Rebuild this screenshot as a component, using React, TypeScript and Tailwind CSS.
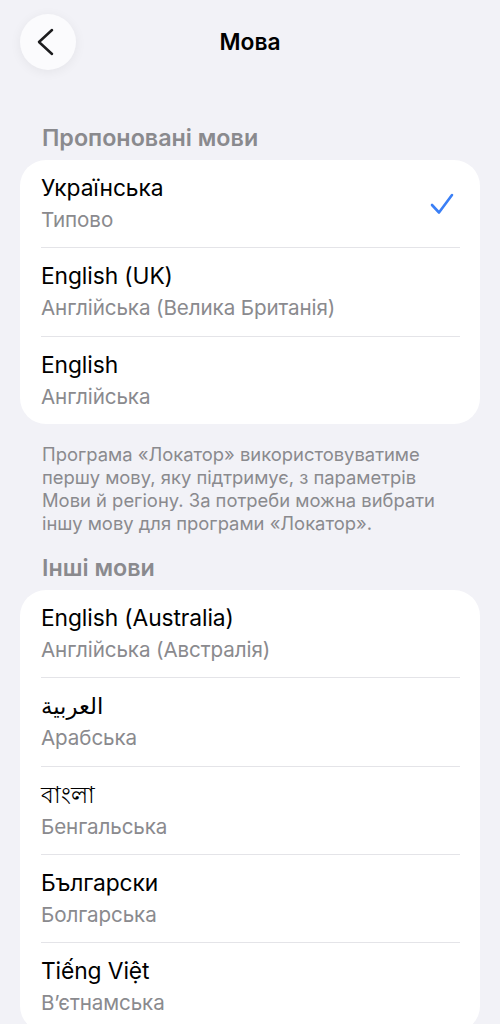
import React from "react";

const font = { fontFamily: "Inter, 'Noto Sans', 'DejaVu Sans', sans-serif" };

type Item = { title: string; sub: string; checked?: boolean; lang?: string };

const suggested: Item[] = [
  { title: "Українська", sub: "Типово", checked: true },
  { title: "English (UK)", sub: "Англійська (Велика Британія)" },
  { title: "English", sub: "Англійська" },
];

const others: Item[] = [
  { title: "English (Australia)", sub: "Англійська (Австралія)" },
  { title: "العربية", sub: "Арабська", lang: "ar" },
  { title: "বাংলা", sub: "Бенгальська", lang: "bn" },
  { title: "Български", sub: "Болгарська", lang: "bg" },
  { title: "Tiếng Việt", sub: "В’єтнамська" },
];

function Row({ item, last }: { item: Item; last: boolean }) {
  return (
    <div className="relative pl-[21px] pr-[20px]">
      <div className="flex items-center h-[87.33px]">
        <div className="flex-1 flex flex-col -mt-[1px]">
          <div
            lang={item.lang}
            className="text-[22.8px] leading-[28px] text-black tracking-[-0.1px]"
          >
            {item.title}
          </div>
          <div className="text-[20.6px] leading-[24px] text-[#8a8a8e] mt-[6px] tracking-[-0.1px]">
            {item.sub}
          </div>
        </div>
        {item.checked && (
          <svg width="26" height="24" viewBox="0 0 26 24" className="mr-[5px]">
            <path
              d="M3 13 L10 20.5 L23 3"
              fill="none"
              stroke="#3a7ff6"
              strokeWidth="2.6"
              strokeLinecap="round"
              strokeLinejoin="round"
            />
          </svg>
        )}
      </div>
      {!last && <div className="h-px bg-[#e4e4e8]" />}
    </div>
  );
}

export default function App() {
  return (
    <div className="w-[500px] h-[1024px] overflow-hidden bg-[#f2f2f7]" style={font}>
      <div className="relative h-[84px] flex items-center justify-center">
        <div className="absolute left-[20px] top-[14px] w-[56px] h-[56px] rounded-full bg-[#fbfbfd] shadow-[0_2px_12px_rgba(0,0,0,0.06)] flex items-center justify-center">
          <svg width="56" height="56" viewBox="0 0 56 56">
            <path
              d="M32 16 L19 28 L32 40"
              fill="none"
              stroke="#1c1c1e"
              strokeWidth="2.5"
              strokeLinecap="round"
              strokeLinejoin="round"
            />
          </svg>
        </div>
        <div className="text-[22.8px] font-semibold text-black">Мова</div>
      </div>

      <div className="px-[20px]">
        <div className="pl-[22px] pt-[40px] pb-[8px] text-[23.3px] leading-[28px] font-semibold text-[#8a8a8e]">
          Пропоновані мови
        </div>
        <div className="bg-white rounded-[26px] overflow-hidden">
          {suggested.map((it, i) => (
            <Row key={i} item={it} last={i === suggested.length - 1} />
          ))}
        </div>
        <div className="pl-[22px] pr-[20px] pt-[19px] text-[18.4px] leading-[23px] text-[#8a8a8e]">
          Програма «Локатор» використовуватиме першу мову, яку підтримує, з параметрів Мови й регіону. За потреби можна вибрати іншу мову для програми «Локатор».
        </div>
        <div className="pl-[22px] pt-[19px] pb-[8px] text-[23.3px] leading-[28px] font-semibold text-[#8a8a8e]">
          Інші мови
        </div>
        <div className="bg-white rounded-[26px] overflow-hidden">
          {others.map((it, i) => (
            <Row key={i} item={it} last={false} />
          ))}
        </div>
      </div>
    </div>
  );
}
